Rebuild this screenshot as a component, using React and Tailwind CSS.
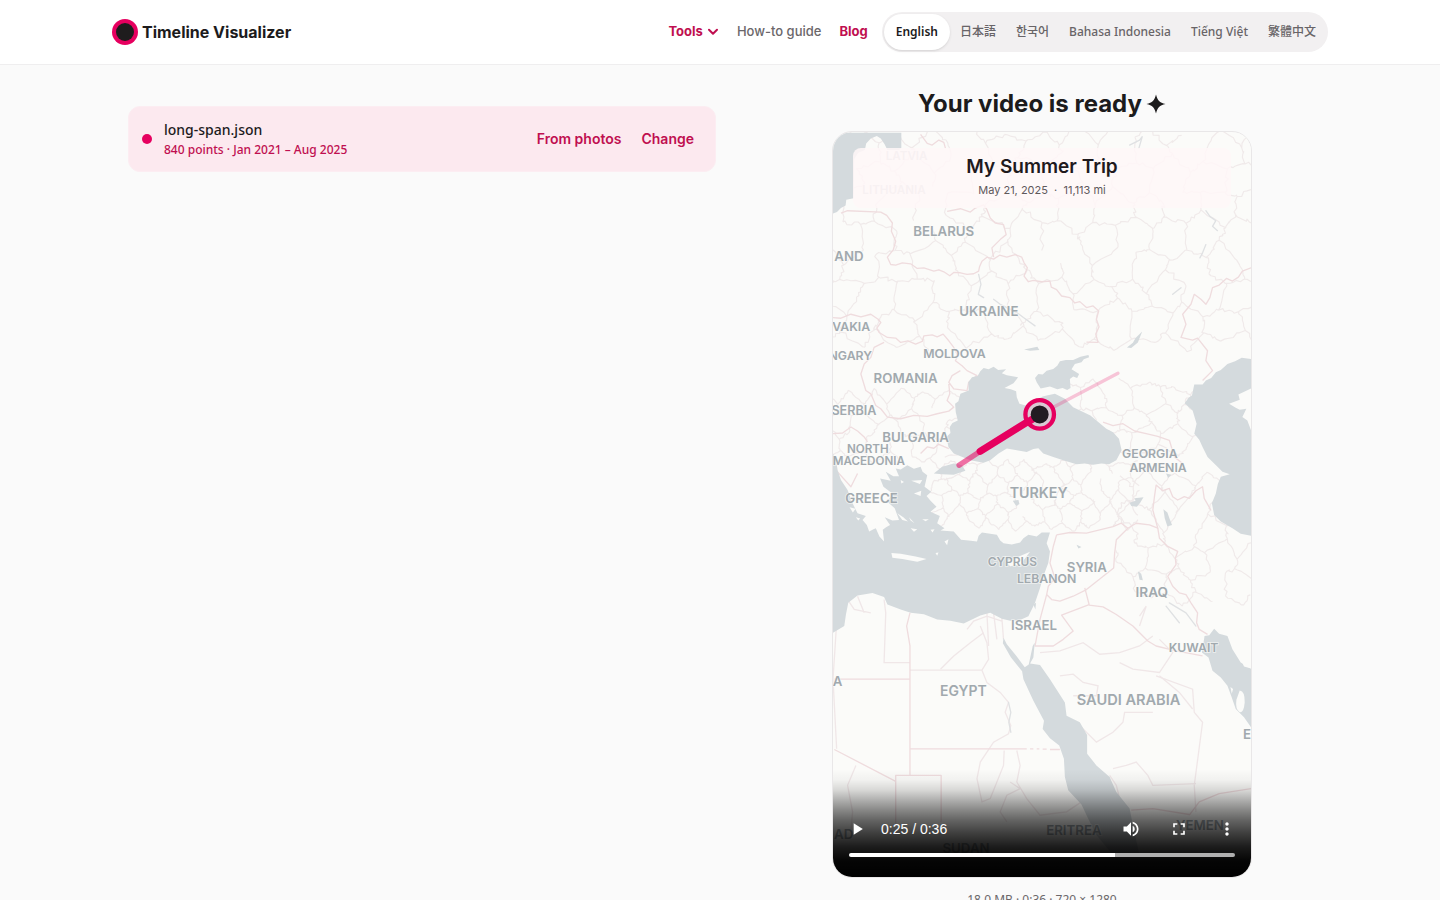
import { MdPlayArrow, MdVolumeUp, MdFullscreen, MdMoreVert } from "react-icons/md";

const languages = ["English", "日本語", "한국어", "Bahasa Indonesia", "Tiếng Việt", "繁體中文"];

// Map labels: text, centre x, baseline y, size, tone
const labels = [
  ["LATVIA", 258, 235, 35, "faint"],
  ["LITHUANIA", 220, 338, 35, "faint"],
  ["BELARUS", 370, 465, 40],
  ["AND", 84, 541, 40],
  ["UKRAINE", 506, 705, 40],
  ["VAKIA", 91, 750, 37],
  ["NGARY", 88, 839, 37],
  ["MOLDOVA", 402, 833, 37],
  ["ROMANIA", 255, 907, 40],
  ["SERBIA", 99, 1005, 38],
  ["BULGARIA", 285, 1086, 40],
  ["NORTH", 141, 1118, 35],
  ["MACEDONIA", 144, 1155, 35],
  ["GREECE", 152, 1268, 40],
  ["TURKEY", 656, 1254, 43],
  ["GEORGIA", 991, 1133, 37],
  ["ARMENIA", 1016, 1177, 37],
  ["CYPRUS", 577, 1459, 36],
  ["SYRIA", 801, 1477, 40],
  ["LEBANON", 680, 1511, 37],
  ["IRAQ", 997, 1551, 41],
  ["ISRAEL", 642, 1651, 40],
  ["KUWAIT", 1123, 1717, 37],
  ["EGYPT", 429, 1851, 42],
  ["A", 50, 1822, 40],
  ["SAUDI ARABIA", 927, 1878, 44],
  ["E", 1284, 1981, 40],
  ["AD", 68, 2283, 40],
  ["ERITREA", 762, 2270, 40],
  ["SUDAN", 437, 2325, 40],
  ["YEMEN", 1142, 2255, 40],
];

const noise = (a, b) => {
  const v = Math.sin(a * 127.1 + b * 311.7) * 43758.5453;
  return v - Math.floor(v);
};

// Province lines: a jittered honeycomb with wandering edges
function mesh(x0, y0, x1, y1, cell, seed) {
  const node = (c, r) => {
    const up = (c + r) % 2 === 0 ? -0.22 : 0.22;
    return [
      x0 + (c + (noise(c + seed, r * 3) - 0.5) * 0.6) * cell * 0.62,
      y0 + (r + up + (noise(c * 5, r + seed) - 0.5) * 0.5) * cell,
    ];
  };
  const edge = (a, b, k) => {
    let d = `M${a[0].toFixed(0)} ${a[1].toFixed(0)}`;
    for (let s = 1; s < 6; s++) {
      const t = s / 6;
      const w = cell * 0.14;
      const x = a[0] + (b[0] - a[0]) * t + (noise(k, s) - 0.5) * w;
      const y = a[1] + (b[1] - a[1]) * t + (noise(s, k) - 0.5) * w;
      d += `L${x.toFixed(0)} ${y.toFixed(0)}`;
    }
    return `${d}L${b[0].toFixed(0)} ${b[1].toFixed(0)}`;
  };
  let d = "";
  const cols = Math.floor((x1 - x0) / (cell * 0.62));
  const rows = Math.floor((y1 - y0) / cell);
  for (let r = 0; r < rows; r++) {
    for (let c = 0; c < cols; c++) {
      const k = c * 31 + r * 7 + seed;
      if (noise(k, 77) > 0.12) d += edge(node(c, r), node(c + 1, r), k);
      if ((c + r) % 2 === 1 && r + 1 < rows) d += edge(node(c, r), node(c, r + 1), k + 500);
    }
  }
  return d;
}

const provinces = [
  mesh(10, 160, 1340, 940, 88, 3),
  mesh(20, 950, 420, 1200, 58, 8),
  mesh(740, 920, 1180, 1220, 66, 5),
  mesh(330, 1150, 960, 1400, 46, 12),
  mesh(900, 1190, 1340, 1640, 72, 6),
].join("");

function TripMap() {
  return (
    <svg viewBox="36 153 1260 2240" className="block h-full w-full" role="img" aria-label="Trip map">
      <rect x="36" y="153" width="1260" height="2240" fill="#fbfbf9" />
      <path d={provinces} fill="none" stroke="#f0eaea" strokeWidth="3.5" strokeLinejoin="round" />
      <g fill="none" stroke="#f0e7e8" strokeWidth="4">
        <path d="M190 1560L195 1600L190 1750H268M268 1773H485L505 1740L500 1690L480 1640M485 1773L500 1810L540 1840L565 1870L555 1900L572 1940L565 1965L520 1990L480 2050L470 2100L485 2170L510 2160L530 2110L550 2060L552 2015M590 2015L600 2060L590 2110L620 2160L660 2210L700 2205L740 2200L785 2170M570 2110L600 2130L560 2150L540 2200L560 2230" />
        <path d="M440 1650L460 1625L500 1610L545 1625M500 1600L505 1700M520 1600L530 1680M545 1615L550 1680M360 1770L400 1730L450 1690L490 1660" />
        <path d="M660 1720L720 1715L790 1690L840 1725L900 1720L960 1700L1000 1670M1020 1680L1060 1720L1020 1780L940 1770L900 1750M720 1790L760 1785L790 1810L835 1820L830 1850L760 1850M1020 1790L1080 1840L1120 1890M960 1610L980 1580L960 1640" />
        <path d="M780 1940L830 1990L880 1960L910 1930L915 1900L1000 1900M880 2070L920 2060L950 2050L985 2090L1000 2120L1130 2115M900 2160L890 2120L870 2090M1130 2200L1125 2120L1150 1930L1125 1900L1120 1830L1010 1790" />
        <path d="M80 1560L100 1590L150 1600M110 1550L130 1600M47 1630L36 1800L47 2010M105 2060L80 2120L95 2200L90 2260" />
      </g>
      <g fill="none" stroke="#efdcde" strokeWidth="4" strokeLinejoin="round">
        <path d="M60 395L80 388L180 392L198 402L215 425L212 450L225 480L218 505L200 528L210 550L225 552L245 545L270 548L290 562L310 560L340 570L355 566L370 572L388 584L400 574L420 575L440 580L460 578L475 570L478 556L485 540L500 528L520 534L538 522L560 528L585 520L605 528L612 545L622 560L612 585L625 602L640 598L665 602L690 600L694 618L710 626L725 645L750 650L765 666L780 662L800 680L820 675L837 690L830 715L838 738L828 760L835 785L800 784" />
        <path d="M520 528L515 500L540 475L558 460L550 430L525 425L510 410L500 385L490 370L465 380L450 392L420 382L380 390M300 158L320 185L335 190L355 175L370 182L375 200" />
        <path d="M36 710L60 712L90 700L120 708L150 700L172 715L180 725L168 742L175 755L200 770L225 772L240 785L262 780L285 790L305 782L310 765L335 762L350 768L368 760L385 780L400 800L412 825L405 840L425 855L440 870L470 885L445 905L440 930L400 925L385 905L395 885L420 870M385 910L388 940L380 960L400 980L385 992L350 1000L320 1008L280 1005L240 1015L200 1010L180 985L165 975L150 940L135 930L120 880L130 850L150 830L160 800L190 785" />
        <path d="M36 1060L65 1058L90 1040L110 1052L130 1070L140 1085M300 1120L320 1100L340 1104L355 1092L385 1105M36 1160L90 1220L110 1180M850 1025L880 1036L910 1030L945 1052L980 1060L1015 1068L1050 1080L1065 1130L1090 1150M1296 560L1270 570L1258 588L1240 600L1222 592L1200 612L1180 620L1172 650L1160 670L1145 655L1125 640L1115 670L1090 700L1100 730L1085 770L1120 778L1135 772L1165 810L1160 840L1180 870L1150 900" />
        <path d="M710 1365L750 1358L800 1360L840 1350L880 1340L905 1330L925 1345L950 1330L990 1335L1015 1345L1000 1290L1005 1250L1010 1215L1030 1232L1050 1225L1060 1250L1075 1260L1095 1250L1110 1255L1130 1232L1150 1220L1155 1255L1175 1290M925 1345L890 1380L885 1420L882 1465L800 1530L760 1550L720 1565L695 1560L680 1545L685 1520L705 1495L690 1450L700 1400L710 1365M1015 1345L1020 1375L1045 1400L1075 1415L1068 1435L1070 1455L1045 1490L1060 1520L1080 1540L1100 1545L1115 1570L1135 1600L1132 1630L1140 1650L1165 1665" />
        <path d="M795 1525L808 1575L725 1607L760 1655L730 1680L700 1700L645 1700L660 1620L680 1545M808 1577L850 1582L890 1605L940 1640L985 1685L1010 1700L1070 1715L1150 1730" />
        <path d="M268 1600L258 1640L268 1700V2090M268 2010H620M630 2010H640M650 2010H658M668 2011H680M690 2012H720M40 2012L225 2108M40 1800H268M225 2240V2090H362V2230M1110 2210L1140 2170L1200 2145L1296 2130M935 2195L1000 2190L1110 2208" />
      </g>
      <g fill="#d4dadd">
        <path d="M36 153H242V198L235 205H200L192 188L180 170L168 163L150 170L136 185L132 205L112 213L100 232L98 350L76 355L74 372L60 380L48 392L36 396Z" />
        <path d="M490 862L505 866L520 858L534 868L558 866L545 878L560 884L594 890L580 908L553 922L572 926L588 932L590 950L598 970L620 976L640 970L655 955L668 948L680 945L705 940L735 955L760 980L790 995L812 1005L830 1020L860 1045L880 1056L898 1075L906 1110L890 1140L868 1152L845 1150L820 1154L795 1150L770 1152L730 1140L700 1130L670 1120L655 1104L640 1106L620 1115L590 1110L560 1105L535 1120L510 1140L490 1148L450 1140L400 1120L384 1100L378 1070L390 1058L388 1040L396 1028L412 1020L406 995L404 970L414 962L420 940L445 930L444 905L455 890L472 886L480 872Z" />
        <path d="M645 892L655 880L668 882L680 870L700 865L712 855L720 842L738 838L760 838L782 828L806 823L808 830L792 836L785 845L765 850L755 866L778 880L772 892L760 888L750 895L752 922L742 928L728 922L712 926L690 918L662 924L650 905Z" />
        <path d="M1296 835L1268 831L1248 842L1225 850L1205 868L1190 875L1176 892L1160 900L1150 912L1125 912L1118 945L1108 952L1096 968L1120 990L1132 1030L1125 1060L1140 1078L1150 1100L1165 1130L1195 1160L1210 1175L1232 1182L1205 1190L1196 1212L1190 1240L1178 1270L1185 1305L1205 1325L1240 1345L1265 1362L1296 1368V1050L1285 1020L1270 1010L1282 985L1262 988L1250 982L1230 970L1262 958L1258 942L1296 924Z" />
        <path d="M36 1120L45 1140L50 1170L60 1200L80 1230L95 1270L110 1300L135 1308L125 1320L138 1335L145 1355L158 1348L165 1345L176 1370L190 1385L186 1350L196 1342L208 1335L192 1312L215 1322L235 1320L222 1285L200 1265L215 1240L188 1220L178 1195L210 1202L195 1175L218 1188L235 1188L225 1165L240 1168L260 1155L280 1166L300 1160L306 1175L320 1185L312 1220L332 1235L318 1248L330 1262L348 1280L330 1295L358 1308L350 1330L372 1345L360 1352L400 1355L422 1380L445 1382L470 1385L475 1368L485 1358L510 1362L530 1365L540 1382L550 1390L575 1394L600 1388L610 1375L625 1365L650 1370L665 1358L690 1358L680 1390L690 1415L685 1450L670 1490L660 1525L645 1570L625 1610L600 1622L570 1624L545 1618L510 1600L480 1608L430 1632L390 1624L350 1620L310 1604L270 1600L240 1590L200 1575L190 1552L155 1540L110 1548L82 1570L75 1605L70 1640L36 1660Z" />
        <path d="M340 1180L365 1160L400 1150L425 1155L435 1172L400 1184L365 1182Z" />
        <path d="M550 1675L560 1695L590 1732L614 1764L626 1756L638 1700L644 1690L640 1735L630 1753L660 1757L690 1800L735 1870L740 1910L780 1930L802 1968L802 2025L830 2060L870 2095L890 2140L930 2190L942 2250L960 2330L880 2330L830 2270L805 2220L785 2178L745 2135L735 2095L732 2040L718 2000L690 1978L668 1950L672 1925L640 1865L610 1800L606 1776L572 1734L548 1692Z" />
        <path d="M1156 1670L1170 1668L1185 1648L1200 1663L1225 1670L1240 1710L1265 1750L1296 1768V1945L1275 1915L1250 1890L1238 1855L1225 1820L1205 1795L1180 1775L1168 1735L1148 1720Z" />
        <path d="M930 1268L948 1262L945 1255L972 1252L962 1268L952 1280L935 1278ZM1032 1288L1044 1298L1050 1315L1058 1335L1044 1340L1036 1315ZM955 1475L965 1482L970 1502L960 1500ZM578 1262L595 1260L598 1272L588 1278ZM922 800L940 786L948 772L968 752L955 785L935 802ZM612 806L652 798L658 808L630 810ZM770 1395L785 1402L776 1406ZM1040 1180L1056 1184L1046 1194ZM640 1575L648 1570L646 1590Z" />
      </g>
      <g fill="#fbfbf9">
        <path d="M212 1420L240 1422L285 1430L318 1438L290 1446L245 1438L215 1434ZM556 1445L585 1435L630 1416L612 1440L600 1455L570 1460ZM230 1300L248 1312L262 1325L245 1320ZM265 1312L282 1330L270 1322ZM372 1385L384 1378L380 1396ZM272 1202L305 1200L298 1212ZM280 1240L302 1232L300 1248ZM270 1345L290 1348L280 1356ZM305 1318L325 1318L315 1324ZM345 1420L354 1418L350 1428ZM215 1312L228 1318L220 1320ZM330 1350L342 1348L336 1358ZM240 1200L250 1206L242 1210ZM86 1282L104 1286L96 1298ZM105 1312L118 1316L112 1322Z" />
        <path d="M1262 1834Q1278 1836 1277 1870Q1274 1902 1262 1900Q1248 1890 1252 1862ZM1234 1824L1242 1830L1238 1844Z" />
        <path d="M1265 1740L1296 1748V1768L1275 1762Z" />
      </g>
      <g fill="none" stroke="#dfe1e3" strokeWidth="4" strokeLinecap="round" strokeLinejoin="round">
        <path d="M475 580L482 610L474 640L490 650M520 655L540 670L560 680L590 695L610 710L645 735M1160 388L1172 405L1190 418L1180 435L1195 448M1160 490L1150 515L1142 530M1060 640L1085 620M930 190L960 175L968 165L958 200M565 1870L572 1900L566 1930L572 1960M1050 1570L1100 1600L1130 1640M1040 1580L1080 1630" />
      </g>
      <g fontFamily="Inter, sans-serif" textAnchor="middle" fontWeight="600">
        {labels.map(([text, x, y, size, tone]) => (
          <text
            key={text}
            x={x}
            y={y}
            fontSize={size}
            fill={tone ? "#c9cccf" : "#a1a9ae"}
            stroke="#fbfbf9"
            strokeWidth="5"
            strokeOpacity="0.7"
            paintOrder="stroke"
          >
            {text}
          </text>
        ))}
      </g>
      <g stroke="#e6005f" strokeLinecap="round" fill="none">
        <path d="M657 1003L895 878" strokeWidth="10" opacity="0.22" />
        <path d="M480 1113L416 1155" strokeWidth="16" opacity="0.55" />
        <path d="M657 1003L480 1113" strokeWidth="22" />
      </g>
      <circle cx="659" cy="1002" r="43" fill="#d9c9d3" stroke="#e6005f" strokeWidth="13" />
      <path d="M642 1013L620 1027" stroke="#e6005f" strokeWidth="22" />
      <circle cx="659" cy="1002" r="27" fill="#231b22" />
    </svg>
  );
}

function VideoPlayer() {
  return (
    <div className="relative mt-3 aspect-[9/16] w-full max-w-[420px] overflow-hidden rounded-[20px] border border-[#e9e7e8] bg-[#fbfbf9]">
      <TripMap />
      <div className="absolute inset-x-5 top-4 rounded-lg bg-[#fff7f8]/85 pt-1.5 pb-2 text-center">
        <p className="text-[19px] leading-[26px] font-semibold text-[#1f1a1d]">My Summer Trip</p>
        <p className="text-[11px] leading-5 whitespace-pre text-[#5f595c]">May 21, 2025  ·  11,113 mi</p>
      </div>
      <div className="absolute inset-x-0 bottom-0 bg-[linear-gradient(to_top,#000_0,rgba(0,0,0,0.98)_16px,rgba(0,0,0,0.89)_30px,rgba(0,0,0,0.75)_44px,rgba(0,0,0,0.6)_57px,rgba(0,0,0,0.46)_67px,rgba(0,0,0,0.3)_77px,rgba(0,0,0,0.14)_87px,rgba(0,0,0,0.04)_97px,transparent_108px)] px-4 pt-16 pb-5 text-white">
        <div className="flex h-8 items-center text-sm">
          <button aria-label="Play" className="-ml-0.5">
            <MdPlayArrow size={20} />
          </button>
          <span className="ml-3.5 flex-1 font-['Liberation_Sans',sans-serif]">0:25 / 0:36</span>
          <div className="-mr-0.5 flex gap-7">
            <button aria-label="Mute">
              <MdVolumeUp size={20} />
            </button>
            <button aria-label="Full screen">
              <MdFullscreen size={20} />
            </button>
            <button aria-label="More options">
              <MdMoreVert size={20} />
            </button>
          </div>
        </div>
        <input
          type="range"
          aria-label="Seek"
          min="0"
          max="36"
          defaultValue="25"
          className="mt-2 block h-1 w-full appearance-none rounded-full bg-[linear-gradient(to_right,#fff_69%,#b0b0b0_69%)] [&::-webkit-slider-thumb]:h-1 [&::-webkit-slider-thumb]:w-0 [&::-webkit-slider-thumb]:appearance-none"
        />
      </div>
    </div>
  );
}

export default function App() {
  return (
    <div className="min-h-screen bg-[#fafafa] font-[Inter,'Noto_Sans_CJK_JP','Noto_Sans_CJK_KR',sans-serif] text-[#1c1b1c]">
      <header className="border-b border-[#efeeef] bg-white">
        <div className="mx-auto flex h-16 max-w-[1280px] items-center justify-between px-8">
          <a href="#home" className="flex items-center gap-1 font-bold">
            <svg viewBox="0 0 26 26" className="size-[26px]" aria-hidden="true">
              <circle cx="13" cy="13" r="13" fill="#e6005f" />
              <circle cx="13" cy="13" r="9" fill="#1e1c1d" />
            </svg>
            Timeline Visualizer
          </a>
          <div className="flex items-center">
            <nav className="mr-3.5 flex items-center gap-[18px] text-[13px]">
              <button className="flex items-center gap-1 font-bold text-[#c00f50]">
                Tools
                <svg viewBox="0 0 12 12" className="size-3" fill="none" stroke="currentColor" strokeWidth="2" strokeLinecap="round" strokeLinejoin="round" aria-hidden="true">
                  <path d="M2 3.8L6 7.8L10 3.8" />
                </svg>
              </button>
              <a href="#guide" className="font-medium text-[#6b676a]">How-to guide</a>
              <a href="#blog" className="font-bold text-[#c00f50]">Blog</a>
            </nav>
            <div className="flex h-10 items-center rounded-full bg-[#f2f0f1] p-0.5 font-['Noto_Sans','Noto_Sans_CJK_JP',sans-serif] text-xs font-medium text-[#686467]">
              {languages.map((name, i) => (
                <button
                  key={name}
                  className={
                    i === 0
                      ? "h-9 rounded-full bg-white px-3 font-semibold text-[#1c1b1c] shadow-sm"
                      : "h-9 px-2.5 whitespace-nowrap"
                  }
                >
                  {name}
                </button>
              ))}
            </div>
          </div>
        </div>
      </header>
      <main className="mx-auto grid max-w-[1280px] grid-cols-[588fr_572fr] items-start gap-10 pt-6 pr-8 pl-12">
        <section className="mt-[17px] flex items-center rounded-xl border border-[#fcedf2] bg-[#fce9ef] px-[13px] py-3">
          <span className="size-2.5 rounded-full bg-[#e6005f]" />
          <div className="ml-3 flex-1 font-['Noto_Sans',sans-serif]">
            <p className="text-sm leading-[22px] font-medium">long-span.json</p>
            <p className="text-xs leading-[18px] font-medium text-[#c00f50]">840 points · Jan 2021 – Aug 2025</p>
          </div>
          <div className="mr-2 flex gap-5 text-sm font-semibold text-[#c00f50]">
            <button>From photos</button>
            <button>Change</button>
          </div>
        </section>
        <section className="flex flex-col items-center">
          <h1 className="flex items-center gap-1 text-2xl leading-[30px] font-bold">
            Your video is ready
            <svg viewBox="0 0 20 20" className="size-5" fill="#1c1b1c" aria-hidden="true">
              <path d="M10 .5C11.5 6.5 13.5 8.5 19.5 10C13.5 11.5 11.5 13.5 10 19.5C8.5 13.5 6.5 11.5 .5 10C6.5 8.5 8.5 6.5 10 .5Z" />
            </svg>
          </h1>
          <VideoPlayer />
          <p className="mt-3 pb-8 font-['Noto_Sans',sans-serif] text-xs leading-5 text-[#6b676a]">18.0 MB · 0:36 · 720 × 1280</p>
        </section>
      </main>
    </div>
  );
}
